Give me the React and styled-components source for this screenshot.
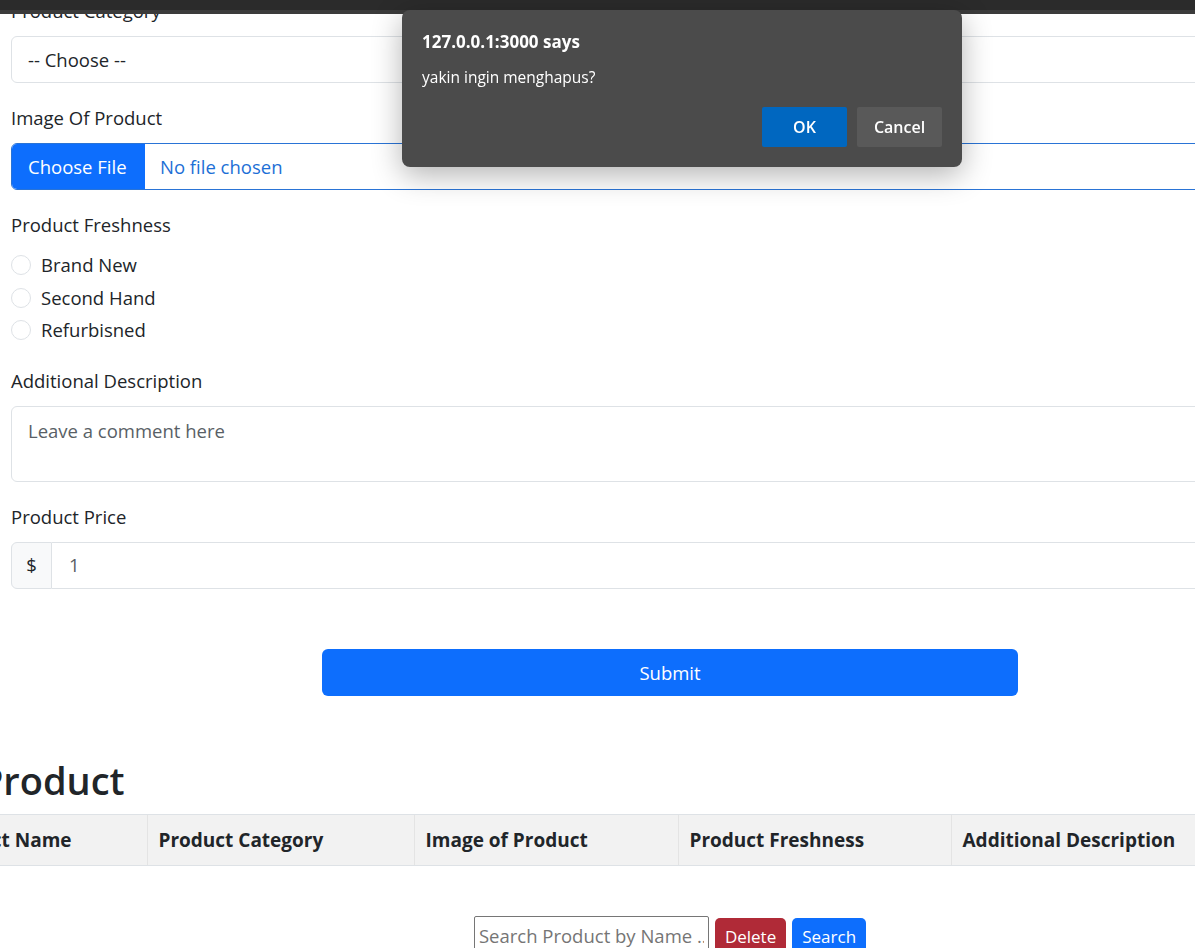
import React from "react";
import styled, { createGlobalStyle } from "styled-components";

const GlobalStyle = createGlobalStyle`
  html, body {
    margin: 0;
    padding: 0;
    width: 1195px;
    height: 948px;
    overflow: hidden;
    background: #fff;
  }
  body {
    font-family: "Open Sans", "Noto Sans", sans-serif;
    color: #212529;
    font-size: 18.5px;
    line-height: 30px;
  }
  * { box-sizing: border-box; }
`;

const columns = [
  { title: "Product Name", width: 223 },
  { title: "Product Category", width: 267 },
  { title: "Image of Product", width: 264 },
  { title: "Product Freshness", width: 273 },
  { title: "Additional Description", width: 260 },
  { title: "Product Price", width: 219 },
];

const freshness = ["Brand New", "Second Hand", "Refurbisned"];

const App = () => {
  return (
    <>
      <GlobalStyle />
      <BrowserBar />
      <Viewport>
        <Page>
          <Form>
            <Field>
              <Label>Product Category</Label>
              <Select defaultValue="">
                <option value="">-- Choose --</option>
              </Select>
            </Field>

            <Field>
              <Label>Image Of Product</Label>
              <FileBox>
                <FileButton>Choose File</FileButton>
                <FileName>No file chosen</FileName>
              </FileBox>
            </Field>

            <Field>
              <Label>Product Freshness</Label>
              {freshness.map((f) => (
                <RadioRow key={f}>
                  <Radio />
                  <span>{f}</span>
                </RadioRow>
              ))}
            </Field>

            <Field>
              <Label>Additional Description</Label>
              <TextArea placeholder="Leave a comment here" />
            </Field>

            <Field>
              <Label>Product Price</Label>
              <InputGroup>
                <Addon>$</Addon>
                <PriceInput defaultValue="1" />
              </InputGroup>
            </Field>

            <SubmitButton>Submit</SubmitButton>
          </Form>

          <ListSection>
            <Heading>Product</Heading>
            <Table>
              <thead>
                <tr>
                  {columns.map((c) => (
                    <Th key={c.title} style={{ width: c.width }}>
                      {c.title}
                    </Th>
                  ))}
                </tr>
              </thead>
            </Table>
            <SearchRow>
              <SearchInput placeholder="Search Product by Name ..." />
              <SmallButton $variant="danger">Delete</SmallButton>
              <SmallButton $variant="primary">Search</SmallButton>
            </SearchRow>
          </ListSection>
        </Page>
      </Viewport>

      <Dialog>
        <DialogTitle>127.0.0.1:3000 says</DialogTitle>
        <DialogMessage>yakin ingin menghapus?</DialogMessage>
        <DialogActions>
          <DialogButton $primary>OK</DialogButton>
          <DialogButton>Cancel</DialogButton>
        </DialogActions>
      </Dialog>
    </>
  );
};

export default App;

const BrowserBar = styled.div`
  height: 14px;
  background: #2b2b2b;
  border-bottom: 4px solid #3b3b3b;
`;

const Viewport = styled.div`
  height: 934px;
  overflow: hidden;
`;

const Page = styled.div`
  padding-left: 11px;
  margin-top: -18px;
  width: 1329px;
`;

const Form = styled.form`
  width: 1318px;
  display: flex;
  flex-direction: column;
`;

const Field = styled.div`
  margin-bottom: 20px;
  display: flex;
  flex-direction: column;
`;

const Label = styled.label`
  display: block;
  height: 30px;
  margin-bottom: 10px;
`;

const controlBase = `
  font-family: "Open Sans", "Noto Sans", sans-serif;
  font-size: 18.5px;
  line-height: 30px;
  border: 1px solid #dee2e6;
  border-radius: 6px;
  background: #fff;
  color: #212529;
  outline: none;
`;

const Select = styled.select`
  ${controlBase}
  appearance: none;
  height: 47px;
  padding: 0 16px;
  width: 100%;
`;

const FileBox = styled.div`
  display: flex;
  height: 47px;
  border: 1px solid #2a74d6;
  border-radius: 6px;
  overflow: hidden;
`;

const FileButton = styled.span`
  background: #0d6efd;
  color: #fff;
  padding: 0 16px;
  display: flex;
  align-items: center;
  width: 133px;
  flex: none;
  white-space: nowrap;
`;

const FileName = styled.span`
  color: #1d6fd6;
  display: flex;
  align-items: center;
  padding-left: 15px;
`;

const RadioRow = styled.div`
  display: flex;
  align-items: center;
  gap: 10px;
  height: 30px;
  margin-bottom: 2.5px;
  &:last-child {
    margin-bottom: 0.5px;
  }
`;

const Radio = styled.span`
  width: 20px;
  height: 20px;
  border-radius: 50%;
  border: 1px solid #dee2e6;
  background: #fff;
  flex: none;
`;

const TextArea = styled.textarea`
  ${controlBase}
  height: 76px;
  padding: 9px 16px;
  resize: none;
  width: 100%;
  &::placeholder {
    color: #595f66;
  }
`;

const InputGroup = styled.div`
  display: flex;
  height: 47px;
`;

const Addon = styled.span`
  width: 41px;
  display: flex;
  align-items: center;
  justify-content: center;
  background: #f8f9fa;
  border: 1px solid #dee2e6;
  border-radius: 6px 0 0 6px;
`;

const PriceInput = styled.input`
  ${controlBase}
  flex: 1;
  border-left: none;
  border-radius: 0 6px 6px 0;
  padding: 0 17px;
  color: #595f66;
`;

const SubmitButton = styled.button`
  align-self: center;
  width: 696px;
  height: 47px;
  margin-top: 40px;
  border: none;
  border-radius: 6px;
  background: #0d6efd;
  color: #fff;
  font-family: "Open Sans", "Noto Sans", sans-serif;
  font-size: 18.5px;
`;

const ListSection = styled.section`
  width: 1318px;
  margin-top: 61px;
  display: flex;
  flex-direction: column;
  align-items: center;
`;

const Heading = styled.h2`
  align-self: flex-start;
  margin: 0 0 11px -31px;
  font-size: 38px;
  line-height: 46px;
  font-weight: 600;
`;

const Table = styled.table`
  align-self: flex-start;
  margin-left: -87px;
  border-collapse: collapse;
  table-layout: fixed;
  width: 1506px;
  flex: none;
`;

const Th = styled.th`
  background: #f2f2f2;
  border-top: 1px solid #dee2e6;
  border-bottom: 1px solid #dee2e6;
  border-left: 1px solid #e4e4e4;
  padding: 10px 11px;
  text-align: left;
  font-size: 19px;
  font-weight: 700;
  line-height: 30px;
  white-space: nowrap;
  &:first-child {
    border-left: none;
  }
`;

const SearchRow = styled.div`
  margin-top: 50px;
  display: flex;
  align-items: flex-start;
  gap: 6px;
`;

const SearchInput = styled.input`
  width: 235px;
  height: 40px;
  border: 1px solid #767676;
  border-radius: 2px;
  padding: 0 4px;
  font-family: "Open Sans", "Noto Sans", sans-serif;
  font-size: 18.5px;
  &::placeholder {
    color: #757575;
  }
`;

const SmallButton = styled.button`
  margin-top: 2px;
  height: 38px;
  padding: 0 10px;
  border: none;
  border-radius: 5px;
  color: #fff;
  font-family: "Open Sans", "Noto Sans", sans-serif;
  font-size: 17px;
  line-height: 38px;
  background: ${(p) => (p.$variant === "danger" ? "#b02a37" : "#0d6efd")};
`;

const Dialog = styled.div`
  position: fixed;
  top: 10px;
  left: 402px;
  width: 560px;
  height: 157px;
  background: #4b4b4b;
  border-radius: 8px;
  box-shadow: 0 8px 30px rgba(0, 0, 0, 0.3);
  padding: 19px 20px 20px 20px;
  color: #fff;
  font-family: "Open Sans", "Noto Sans", sans-serif;
  display: flex;
  flex-direction: column;
`;

const DialogTitle = styled.div`
  font-size: 17px;
  font-weight: 700;
  line-height: 26px;
`;

const DialogMessage = styled.div`
  font-size: 15.5px;
  line-height: 24px;
  margin-top: 10px;
`;

const DialogActions = styled.div`
  display: flex;
  justify-content: flex-end;
  gap: 10px;
  margin-top: auto;
`;

const DialogButton = styled.button`
  width: 85px;
  height: 40px;
  border: none;
  border-radius: 2px;
  color: #fff;
  font-family: "Open Sans", "Noto Sans", sans-serif;
  font-size: 16px;
  font-weight: 600;
  background: ${(p) => (p.$primary ? "#0067c0" : "#595959")};
`;
